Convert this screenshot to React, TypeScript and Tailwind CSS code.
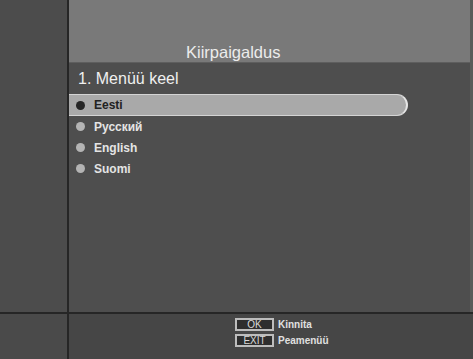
const ITEMS = ['Eesti', 'Русский', 'English', 'Suomi']

function Bullet({ dark }: { dark?: boolean }) {
  return <span className={`block w-[9px] h-[9px] rounded-full ${dark ? 'bg-[#262626]' : 'bg-[#b4b4b4]'}`} />
}

function KeyHint({ k, label }: { k: string; label: string }) {
  return (
    <div className="flex items-center gap-[4px] h-[13px]">
      <span className="w-[39px] h-[13px] border-2 border-[#bdbdbd] bg-[#2e2e2e] text-[#d8d8d8] text-[10px] leading-[9px] flex items-center justify-center">
        {k}
      </span>
      <span className="text-[#e0e0e0] text-[10px] font-bold">{label}</span>
    </div>
  )
}

export default function App() {
  return (
    <div className="w-[473px] h-[359px] flex flex-col bg-[#4b4b4b] overflow-hidden" style={{ fontFamily: '"Liberation Sans", Arial, sans-serif' }}>
      {/* top: menu area */}
      <div className="flex h-[312px]">
        <div className="w-[67px] bg-[#4c4c4c]" />
        <div className="w-[2px] bg-[#262626]" />
        <div className="flex-1 flex flex-col bg-[#4e4e4e]">
          <div className="h-[62px] bg-[#797979] flex items-end pl-[117px]">
            <span className="text-[#ececec] text-[16.5px] leading-[20px]">Kiirpaigaldus</span>
          </div>
          <div className="h-[1px] bg-[#5e5e5e]" />
          <div className="h-[31px] flex items-center pl-[9px]">
            <span className="text-[#f0f0f0] text-[16px] leading-[20px]">1. Menüü keel</span>
          </div>
          <div className="flex flex-col">
            {ITEMS.map((item, i) =>
              i === 0 ? (
                <div key={item} className="w-[339px] h-[22px] flex items-center gap-[9px] pl-[7px] bg-[#a9a9a9] border-y border-[#d4d4d4] border-r-2 border-r-[#e6e6e6] rounded-r-[11px]">
                  <Bullet dark />
                  <span className="text-[#222] text-[12px] font-bold">{item}</span>
                </div>
              ) : (
                <div key={item} className="h-[21px] flex items-center gap-[9px] pl-[7px]">
                  <Bullet />
                  <span className="text-[#e4e4e4] text-[12px] font-bold">{item}</span>
                </div>
              )
            )}
          </div>
        </div>
        <div className="w-[3px] bg-[#5a5a5a]" />
      </div>
      <div className="h-[2px] bg-[#262626]" />
      {/* footer */}
      <div className="flex flex-1">
        <div className="w-[67px] bg-[#4a4a4a]" />
        <div className="w-[2px] bg-[#262626]" />
        <div className="flex-1 bg-[#464646] flex flex-col gap-[3px] pt-[4px] pl-[166px]">
          <KeyHint k="OK" label="Kinnita" />
          <KeyHint k="EXIT" label="Peamenüü" />
        </div>
      </div>
    </div>
  )
}
